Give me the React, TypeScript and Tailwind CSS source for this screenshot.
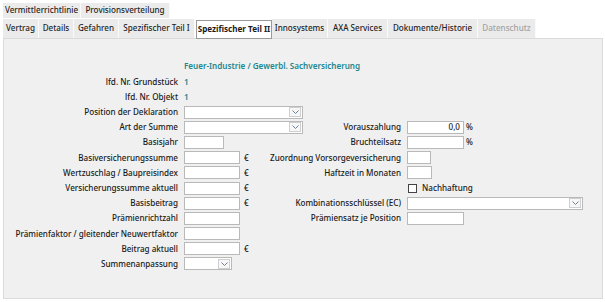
import React from "react";

const Chevron = () => (
  <svg width="7" height="4" viewBox="0 0 7 4" className="block">
    <path d="M0.5 0.5 L3.5 3.5 L6.5 0.5" fill="none" stroke="#6b7f99" strokeWidth="1" />
  </svg>
);

function Input({ w, value }: { w: string; value?: string }) {
  return (
    <div className={`h-[13px] bg-white border border-[#b9b9b9] flex items-center justify-end pr-[3px] ${w}`}>
      {value ? <span className="leading-none">{value}</span> : null}
    </div>
  );
}

function Combo({ w }: { w: string }) {
  return (
    <div className={`h-[13px] bg-white border border-[#b9b9b9] flex justify-end items-center pr-[1px] ${w}`}>
      <div className="w-[12px] h-[10px] border border-[#cfcfcf] bg-[#f7f7f7] flex items-center justify-center">
        <Chevron />
      </div>
    </div>
  );
}

function Label({ children }: { children?: React.ReactNode }) {
  return (
    <div className="h-[13px] flex items-center justify-end whitespace-nowrap leading-none">{children}</div>
  );
}

function Cell({ children }: { children?: React.ReactNode }) {
  return <div className="h-[13px] flex items-center whitespace-nowrap leading-none">{children}</div>;
}

function Euro({ w }: { w: string }) {
  return (
    <Cell>
      <Input w={w} />
      <span className="ml-[4px]">€</span>
    </Cell>
  );
}

function Tab({ w, children, disabled }: { w: string; children: React.ReactNode; disabled?: boolean }) {
  return (
    <div
      className={`h-full flex items-center justify-center bg-[#ebebeb] border-r border-[#fafafa] whitespace-nowrap ${w} ${
        disabled ? "text-[#a3a3a3]" : "text-[#1f1f1f]"
      }`}
    >
      {children}
    </div>
  );
}

export default function App() {
  return (
    <div className="w-[605px] h-[302px] bg-white overflow-hidden font-['Noto_Sans','Open_Sans',sans-serif] font-medium text-[8.1px] text-[#1a1a1a] leading-none">
      <div className="ml-[3px] mt-[3px] h-[15px] flex">
        <Tab w="w-[78px]">Vermittlerrichtlinie</Tab>
        <Tab w="w-[89px]">Provisionsverteilung</Tab>
      </div>
      <div className="ml-[3px] mt-[1px] h-[19px] flex items-end">
        <Tab w="w-[36px]">Vertrag</Tab>
        <Tab w="w-[35px]">Details</Tab>
        <Tab w="w-[45px]">Gefahren</Tab>
        <Tab w="w-[76px]">Spezifischer Teil I</Tab>
        <div className="relative z-10 ml-[1px] w-[76px] h-[19px] mt-[2px] -mb-[1px] bg-white border border-[#9a9a9a] flex items-center justify-center font-bold whitespace-nowrap">
          Spezifischer Teil II
        </div>
        <Tab w="w-[56px]">Innosystems</Tab>
        <Tab w="w-[60px]">AXA Services</Tab>
        <Tab w="w-[90px]">Dokumente/Historie</Tab>
        <Tab w="w-[58px]" disabled>
          Datenschutz
        </Tab>
      </div>
      <div className="ml-[3px] w-[600px] h-[261px] border border-[#dadada] bg-[#f0f0f0] pt-[21px]">
        <div className="grid grid-cols-[174px_120px_91px_1fr] gap-x-[6px] auto-rows-[15.2px] items-start">
          <Label />
          <div className="col-span-3 h-[13px] flex items-center text-[#23868e] font-semibold whitespace-nowrap">
            Feuer-Industrie / Gewerbl. Sachversicherung
          </div>

          <Label>lfd. Nr. Grundstück</Label>
          <Cell>
            <span className="text-[#23868e] font-semibold">1</span>
          </Cell>
          <Cell />
          <Cell />

          <Label>lfd. Nr. Objekt</Label>
          <Cell>
            <span className="text-[#23868e] font-semibold">1</span>
          </Cell>
          <Cell />
          <Cell />

          <Label>Position der Deklaration</Label>
          <Cell>
            <Combo w="w-[119px]" />
          </Cell>
          <Cell />
          <Cell />

          <Label>Art der Summe</Label>
          <Cell>
            <Combo w="w-[119px]" />
          </Cell>
          <Label>Vorauszahlung</Label>
          <Cell>
            <Input w="w-[57px]" value="0,0" />
            <span className="ml-[2px]">%</span>
          </Cell>

          <Label>Basisjahr</Label>
          <Cell>
            <Input w="w-[40px]" />
          </Cell>
          <Label>Bruchteilsatz</Label>
          <Cell>
            <Input w="w-[57px]" />
            <span className="ml-[2px]">%</span>
          </Cell>

          <Label>Basiversicherungssumme</Label>
          <Euro w="w-[56px]" />
          <Label>Zuordnung Vorsorgeversicherung</Label>
          <Cell>
            <Input w="w-[24px]" />
          </Cell>

          <Label>Wertzuschlag / Baupreisindex</Label>
          <Euro w="w-[56px]" />
          <Label>Haftzeit in Monaten</Label>
          <Cell>
            <Input w="w-[25px]" />
          </Cell>

          <Label>Versicherungssumme aktuell</Label>
          <Euro w="w-[56px]" />
          <Label />
          <Cell>
            <div className="ml-[1px] w-[9px] h-[9px] border border-[#444] bg-white" />
            <span className="ml-[5px]">Nachhaftung</span>
          </Cell>

          <Label>Basisbeitrag</Label>
          <Euro w="w-[56px]" />
          <Label>Kombinationsschlüssel (EC)</Label>
          <Cell>
            <Combo w="w-[176px]" />
          </Cell>

          <Label>Prämienrichtzahl</Label>
          <Cell>
            <Input w="w-[56px]" />
          </Cell>
          <Label>Prämiensatz je Position</Label>
          <Cell>
            <Input w="w-[57px]" />
          </Cell>

          <Label>Prämienfaktor / gleitender Neuwertfaktor</Label>
          <Cell>
            <Input w="w-[56px]" />
          </Cell>
          <Cell />
          <Cell />

          <Label>Beitrag aktuell</Label>
          <Euro w="w-[56px]" />
          <Cell />
          <Cell />

          <Label>Summenanpassung</Label>
          <Cell>
            <Combo w="w-[48px]" />
          </Cell>
          <Cell />
          <Cell />
        </div>
      </div>
    </div>
  );
}
